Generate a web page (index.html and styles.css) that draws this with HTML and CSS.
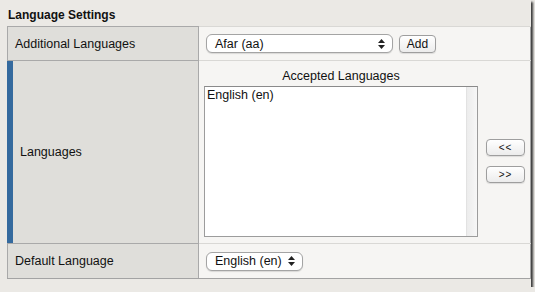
FILE: index.html
```html
<!DOCTYPE html>
<html lang="en">
<head>
    <meta charset="UTF-8">
    <title>Language Settings</title>
    <link rel="stylesheet" href="styles.css">
</head>
<body>
    <div class="window">
        <h3 class="title">Language Settings</h3>
        <table class="settings">
            <tr class="row-add">
                <th>Additional Languages</th>
                <td>
                    <div class="inline">
                        <div class="select select-wide">
                            <span>Afar (aa)</span>
                            <svg class="arrows" width="7" height="10" viewBox="0 0 7 10"><path d="M3.5 0 L7 4 L0 4 Z M3.5 10 L7 6 L0 6 Z" fill="#222"/></svg>
                        </div>
                        <button class="btn btn-add">Add</button>
                    </div>
                </td>
            </tr>
            <tr class="row-langs">
                <th class="active">Languages</th>
                <td>
                    <div class="picker">
                        <div class="list-col">
                            <div class="list-title">Accepted Languages</div>
                            <div class="listbox">
                                <div class="list-items">
                                    <div class="item">English (en)</div>
                                </div>
                                <div class="track"></div>
                            </div>
                        </div>
                        <div class="move-col">
                            <button class="btn btn-move">&lt;&lt;</button>
                            <button class="btn btn-move">&gt;&gt;</button>
                        </div>
                    </div>
                </td>
            </tr>
            <tr class="row-default">
                <th>Default Language</th>
                <td>
                    <div class="select select-small">
                        <span>English (en)</span>
                        <svg class="arrows" width="7" height="10" viewBox="0 0 7 10"><path d="M3.5 0 L7 4 L0 4 Z M3.5 10 L7 6 L0 6 Z" fill="#222"/></svg>
                    </div>
                </td>
            </tr>
        </table>
    </div>
</body>
</html>
```

FILE: styles.css
```css
body{
    margin: 0;
    background: #ebe9e5;
    font-family: "Liberation Sans", Arial, sans-serif;
    font-size: 12.5px;
    color: #111;
}
.window{
    width: 531px;
    height: 287px;
    background: #ebe9e5;
    box-shadow: 2px 2px 2px #3a3a3a;
    overflow: hidden;
}
.title{
    margin: 0;
    padding: 8px 0 0 8px;
    height: 18px;
    font-size: 12px;
    font-weight: bold;
}
.settings{
    margin-left: 7px;
    width: 524px;
    border-collapse: collapse;
    border: 1px solid #a3a3a3;
}
.settings th{
    width: 178px;
    padding: 0 0 0 7px;
    background: #dfdeda;
    border: 1px solid #a9a9a9;
    font-weight: normal;
    text-align: left;
}
.settings td{
    padding: 0 0 0 7px;
    background: #f6f5f3;
    border-top: 1px solid #d9d8d5;
    border-bottom: 1px solid #d9d8d5;
}
.settings th.active{
    padding-left: 12px;
    border-left-color: #356a9e;
    box-shadow: inset 5px 0 0 #356a9e;
}
.row-add th, .row-add td{
    height: 33px;
}
.row-langs th, .row-langs td{
    height: 182px;
}
.row-default th, .row-default td{
    height: 34px;
}
.settings .row-default th, .settings .row-default td{
    border-bottom: 1px solid #a3a3a3;
}
.inline{
    display: flex;
    align-items: center;
    gap: 6px;
}
.select{
    display: flex;
    align-items: center;
    justify-content: space-between;
    box-sizing: border-box;
    height: 19px;
    padding: 0 7px 0 8px;
    background: #fff;
    border: 1px solid #a4a4a4;
    border-radius: 6px;
    box-shadow: 0 1px 1px rgba(0,0,0,0.12);
}
.select-wide{
    width: 187px;
}
.select-small{
    width: 97px;
}
.btn{
    box-sizing: border-box;
    padding: 0;
    font-family: inherit;
    color: #111;
    background: linear-gradient(#ffffff, #ececec);
    border: 1px solid #9e9e9e;
    border-radius: 4px;
    box-shadow: 0 1px 1px rgba(0,0,0,0.1);
}
.btn-add{
    width: 37px;
    height: 18px;
    font-size: 12px;
}
.picker{
    display: flex;
    align-items: center;
    margin-left: -2px;
}
.list-col{
    display: flex;
    flex-direction: column;
    width: 274px;
}
.list-title{
    text-align: center;
    height: 18px;
    line-height: 16px;
}
.listbox{
    display: flex;
    box-sizing: border-box;
    height: 151px;
    background: #fff;
    border: 1px solid #9c9c9c;
    border-top-color: #8a8a8a;
}
.list-items{
    flex: 1;
    padding: 1px 2px;
}
.item{
    line-height: 15px;
}
.track{
    width: 10px;
    background: linear-gradient(to right, #ececec, #f7f7f7);
    border-left: 1px solid #e2e2e2;
}
.move-col{
    display: flex;
    flex-direction: column;
    gap: 10px;
    margin: 18px 0 0 8px;
}
.btn-move{
    width: 39px;
    height: 17px;
    font-size: 10px;
    letter-spacing: 1px;
}
```
